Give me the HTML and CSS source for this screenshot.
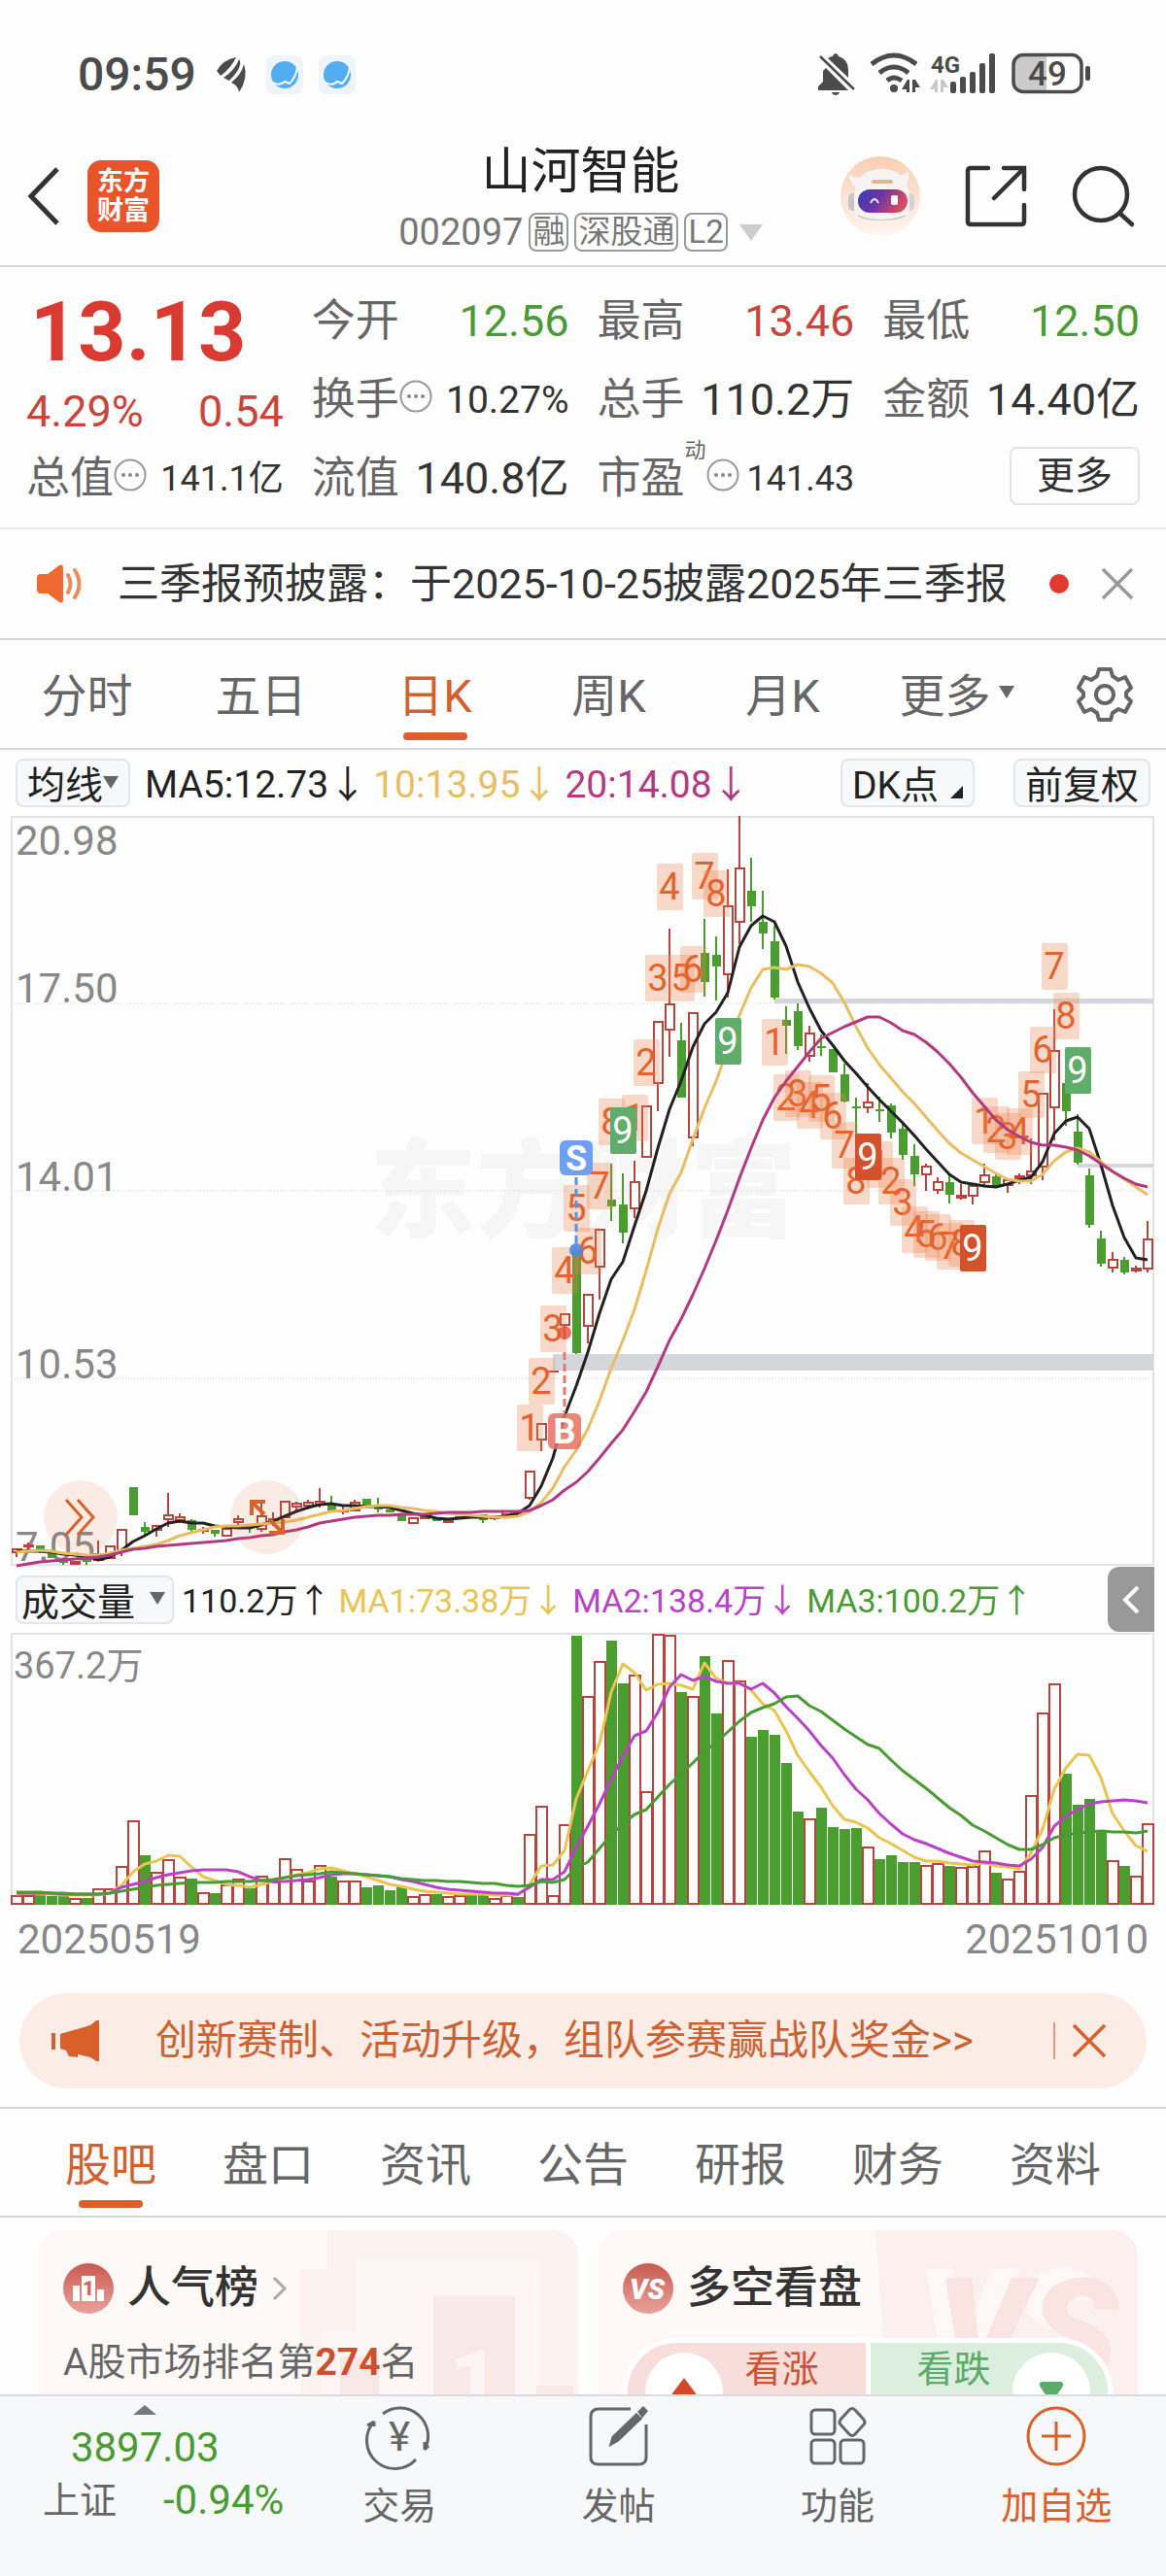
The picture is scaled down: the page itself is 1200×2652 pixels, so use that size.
FILE: index.html
```html
<!DOCTYPE html>
<html lang="zh-CN">
<head>
<meta charset="utf-8">
<meta name="viewport" content="width=device-width, initial-scale=1">
<title>山河智能 002097</title>
<link rel="stylesheet" href="styles.css">
</head>
<body>
<div class="status-bar">
  <div class="status-left">
    <span class="clock">09:59</span>
    <svg class="leaf-icon" viewBox="0 0 32 38"><path d="M1 15Q8 3 21 1Q16 12 5 20ZM8 22Q20 14 24 3Q29 10 14 25ZM16 27Q27 18 29 8Q34 22 24 37Q23 30 16 27Z" fill="#4b4b4b"/></svg>
    <svg class="app-dot" viewBox="0 0 38 40"><rect width="38" height="40" rx="8" fill="#eef3fc"/><circle cx="19" cy="20" r="14" fill="#52aef3"/><path d="M7 28Q14 32 19 27L24 29Q31 22 32 12" fill="none" stroke="#fff" stroke-width="2"/></svg>
    <svg class="app-dot" viewBox="0 0 38 40"><rect width="38" height="40" rx="8" fill="#eef3fc"/><circle cx="19" cy="20" r="14" fill="#52aef3"/><path d="M7 28Q14 32 19 27L24 29Q31 22 32 12" fill="none" stroke="#fff" stroke-width="2"/></svg>
  </div>
  <svg class="status-icons" viewBox="0 0 282 44" fill="#4b4b4b">
    <path d="M8 15L31 38H0V34L5 29V18ZM10 5Q13 3 15 3Q16 0 18 0T21 3Q31 6 31 17V25ZM14 40H22Q21 43 18 43T14 40Z"/>
    <path d="M2 3L37 37" stroke="#4b4b4b" stroke-width="2.5"/>
    <path d="M55 11Q78 -7 101 11M63 20Q78 8 93 20M71 28Q78 22 86 28" fill="none" stroke="#4b4b4b" stroke-width="5"/>
    <circle cx="78" cy="36" r="4"/><path d="M86 37L92 27H94V40H91V37ZM97 27H100L105 35H100V40H97Z"/>
    <text x="116" y="20" class="net-type">4G</text>
    <path d="M115 37L121 27H123V40H120V37ZM126 27H129L134 35H129V40H126Z" fill="#c8c8c8"/>
    <rect x="136" y="29" width="6" height="12" rx="2"/><rect x="146" y="24" width="6" height="17" rx="2"/><rect x="156" y="19" width="6" height="22" rx="2"/><rect x="166" y="10" width="6" height="31" rx="2"/><rect x="176" y="0" width="6" height="41" rx="2"/>
    <path d="M235 2H210Q201 2 201 11V30Q201 39 210 39H235Z" fill="#cacaca"/>
    <rect x="201" y="1.500" width="70" height="38" rx="10" fill="none" stroke="#4b4b4b" stroke-width="3.500"/>
    <rect x="275" y="13" width="5" height="15" rx="2"/>
    <text x="236" y="33" text-anchor="middle" class="battery">49</text>
  </svg>
</div>

<header class="header">
  <div class="header-left">
    <button class="icon-btn" aria-label="返回"><svg width="34" height="60" viewBox="0 0 34 60" fill="none" stroke="#333" stroke-width="5"><path d="M31 2L4 30L31 58"/></svg></button>
    <div class="logo"><span>东方</span><span>财富</span></div>
  </div>
  <div class="header-title">
    <h1>山河智能</h1>
    <div class="subtitle"><span>002097</span><span class="tag">融</span><span class="tag">深股通</span><span class="tag">L2</span><svg class="sub-arrow" width="24" height="17" viewBox="0 0 24 17"><path d="M0 0H24L12 17Z" fill="#ccc"/></svg></div>
  </div>
  <div class="header-right">
    <button class="icon-btn" aria-label="智能助手"><svg width="82" height="82" viewBox="0 0 82 82">
      <defs>
        <linearGradient id="peach" x1="0" y1="0" x2="0" y2="1"><stop offset="0" stop-color="#f9ceb2"/><stop offset="1" stop-color="#fef6f2"/></linearGradient>
        <linearGradient id="visor" x1="0" y1="0" x2="1" y2="0.300"><stop offset="0" stop-color="#3b3cb4"/><stop offset="0.500" stop-color="#6b35a4"/><stop offset="1" stop-color="#d84c62"/></linearGradient>
      </defs>
      <circle cx="41" cy="41" r="41" fill="url(#peach)"/>
      <path d="M9 17Q8 28 17 32L26 21Q12 24 9 17ZM69 13Q73 23 66 32L56 19Q68 21 69 13Z" fill="#f7f3f3"/>
      <rect x="8" y="38" width="10" height="18" rx="5" fill="#c9c4c6"/><rect x="66" y="38" width="10" height="18" rx="5" fill="#d5d0d2"/>
      <path d="M14 44Q14 13 42 13Q70 13 71 44V54Q71 64 60 65H24Q14 64 14 54Z" fill="#f6f3f3"/>
      <path d="M17 60Q41 70 68 60Q64 66 42 66Q20 66 17 60Z" fill="#cfcacc"/>
      <rect x="32" y="24" width="22" height="4" rx="2" fill="#e3b589"/>
      <rect x="18" y="34" width="51" height="24" rx="12" fill="url(#visor)"/>
      <path d="M31 48Q35 40 39 48" fill="none" stroke="#d9ecff" stroke-width="2"/><rect x="52" y="40" width="7" height="10" rx="2" fill="#fff"/>
    </svg></button>
    <button class="icon-btn" aria-label="分享"><svg width="62" height="62" viewBox="0 0 62 62" fill="none" stroke="#333" stroke-width="4.500" stroke-linecap="round"><path d="M23 2H5Q2 2 2 5V57Q2 60 5 60H57Q60 60 60 57V40M39 2H60V24M59 3L29 33"/></svg></button>
    <button class="icon-btn" aria-label="搜索"><svg width="64" height="64" viewBox="0 0 64 64" fill="none" stroke="#333" stroke-width="4.500" stroke-linecap="round"><circle cx="30" cy="30" r="27"/><path d="M50 50L62 61"/></svg></button>
  </div>
</header>

<section class="quote">
  <div class="price-block">
    <div class="price">13.13</div>
    <div class="change"><span>4.29%</span><span>0.54</span></div>
  </div>
  <div class="item"><span class="label">今开</span><span class="down">12.56</span></div>
  <div class="item"><span class="label">最高</span><span class="up">13.46</span></div>
  <div class="item"><span class="label">最低</span><span class="down">12.50</span></div>
  <div class="item"><span class="label">换手</span><svg class="hint" viewBox="0 0 34 34"><use href="#hint-dots"/></svg><span class="mid">10.27%</span></div>
  <div class="item"><span class="label">总手</span><span>110.2万</span></div>
  <div class="item"><span class="label">金额</span><span>14.40亿</span></div>
  <div class="item"><span class="label">总值</span><svg class="hint" viewBox="0 0 34 34"><g id="hint-dots"><circle cx="17" cy="17" r="15.500" fill="none" stroke="#999" stroke-width="2"/><circle cx="10" cy="17" r="2" fill="#888"/><circle cx="17" cy="17" r="2" fill="#888"/><circle cx="24" cy="17" r="2" fill="#888"/></g></svg><span class="small">141.1亿</span></div>
  <div class="item"><span class="label">流值</span><span>140.8亿</span></div>
  <div class="item"><span class="label">市盈</span><sup class="dyn">动</sup><svg class="hint" viewBox="0 0 34 34"><use href="#hint-dots"/></svg><span class="small">141.43</span></div>
  <div class="item item-end"><button class="more-btn">更多</button></div>
</section>

<section class="news">
  <svg width="50" height="40" viewBox="0 0 50 40"><path d="M5 10H12L24 1Q28 -1 28 4V36Q28 41 24 39L12 30H5Q1 30 1 26V14Q1 10 5 10Z" fill="#ee6a30"/><path d="M33 11Q38 20 33 29M40 6Q49 20 40 34" fill="none" stroke="#f08a5a" stroke-width="4" stroke-linecap="round"/></svg>
  <a class="news-text" href="#">三季报预披露：于2025-10-25披露2025年三季报</a>
  <span class="red-dot"></span>
  <button class="icon-btn" aria-label="关闭"><svg width="34" height="34" viewBox="0 0 34 34" stroke="#999" stroke-width="3.500"><path d="M2 2L32 32M32 2L2 32"/></svg></button>
</section>

<nav class="period-tabs">
  <button class="tab">分时</button>
  <button class="tab">五日</button>
  <button class="tab active">日K</button>
  <button class="tab">周K</button>
  <button class="tab">月K</button>
  <button class="tab">更多<svg width="16" height="13" viewBox="0 0 16 13"><path d="M0 0H16L8 13Z" fill="#666"/></svg></button>
  <button class="icon-btn gear" aria-label="设置"><svg width="58" height="58" viewBox="0 0 58 58" fill="none" stroke="#666" stroke-width="4" stroke-linejoin="round"><path d="M23 3H35L37 10L43 14L50 11L56 22L51 27V31L56 36L50 47L43 44L37 48L35 55H23L21 48L15 44L8 47L2 36L7 31V27L2 22L8 11L15 14L21 10Z"/><circle cx="29" cy="29" r="9"/></svg></button>
</nav>

<section class="indicator">
  <button class="chip chip-ma">均线<svg width="16" height="13" viewBox="0 0 16 13"><path d="M0 0H16L8 13Z" fill="#666"/></svg></button>
  <span class="ma black">MA5:12.73<i>↓</i></span>
  <span class="ma yellow">10:13.95<i>↓</i></span>
  <span class="ma purple">20:14.08<i>↓</i></span>
  <button class="chip chip-dk">DK点<svg width="13" height="13" viewBox="0 0 13 13"><path d="M13 0V13H0Z" fill="#222"/></svg></button>
  <button class="chip chip-fq">前复权</button>
</section>

<section class="chart-wrap">
  <svg id="kline" class="chart" viewBox="0 0 1200 772"></svg>
  <button class="float-btn float-next" aria-label="展开"><svg width="34" height="38" viewBox="0 0 34 38" fill="none" stroke="#d9622b" stroke-width="3"><path d="M2 1L18 19L2 37M14 1L30 19L14 37"/></svg></button>
  <button class="float-btn float-full" aria-label="全屏"><svg width="38" height="38" viewBox="0 0 38 38" fill="none" stroke="#d9622b" stroke-width="4"><path d="M17 3H3V17M3 3L16 16M21 35H35V21M35 35L22 22"/></svg></button>
</section>

<section class="volume-head">
  <button class="chip chip-vol">成交量<svg width="16" height="13" viewBox="0 0 16 13"><path d="M0 0H16L8 13Z" fill="#666"/></svg></button>
  <span class="ma black">110.2万<i>↑</i></span>
  <span class="ma gold">MA1:73.38万<i>↓</i></span>
  <span class="ma violet">MA2:138.4万<i>↓</i></span>
  <span class="ma green">MA3:100.2万<i>↑</i></span>
  <button class="drawer" aria-label="展开侧栏"><svg width="18" height="30" viewBox="0 0 18 30" fill="none" stroke="#fff" stroke-width="4"><path d="M16 2L3 15L16 28"/></svg></button>
</section>
<svg id="volume" class="chart" viewBox="0 0 1200 281"></svg>
<div class="dates"><span>20250519</span><span>20251010</span></div>

<section class="banner">
  <svg width="50" height="42" viewBox="0 0 50 42" fill="#d9602a"><path d="M0 13H4V30H0ZM9 14L40 5L46 0H49V42H46L40 38L27 35V38L18 37L15 31L9 29Z"/></svg>
  <a href="#">创新赛制、活动升级，组队参赛赢战队奖金&gt;&gt;</a>
  <span class="banner-sep"></span>
  <button class="icon-btn" aria-label="关闭"><svg width="36" height="36" viewBox="0 0 36 36" stroke="#d9602a" stroke-width="3.500"><path d="M2 2L34 34M34 2L2 34"/></svg></button>
</section>

<nav class="info-tabs">
  <button class="tab active">股吧</button><button class="tab">盘口</button><button class="tab">资讯</button><button class="tab">公告</button><button class="tab">研报</button><button class="tab">财务</button><button class="tab">资料</button>
</nav>

<main class="cards">
  <article class="card">
    <svg class="card-art" viewBox="0 0 285 200" preserveAspectRatio="xMaxYMin meet"><path d="M27 0H285V200H0V40H27Z" fill="#fcf2f0"/><path d="M20 104H56V30H246V200H20Z" fill="#fdf6f4"/><path d="M40 130H80V200H40ZM136 68H220V200H136ZM242 160H280V200H242Z" fill="#f9e9e6"/><text x="178" y="185" text-anchor="middle" class="art-one">1</text></svg>
    <div class="card-head">
      <svg width="52" height="52" viewBox="0 0 52 52"><defs><linearGradient id="badge" x1="0" y1="0" x2="0" y2="1"><stop offset="0" stop-color="#c85a50"/><stop offset="1" stop-color="#e8a39c"/></linearGradient></defs><circle cx="26" cy="26" r="26" fill="url(#badge)"/><path d="M10 23H17V39H10ZM19 13H33V39H19ZM35 27H42V39H35Z" fill="#fff"/><text x="26" y="33" text-anchor="middle" class="badge-one">1</text></svg>
      <h2>人气榜</h2>
      <svg width="16" height="26" viewBox="0 0 16 26" fill="none" stroke="#aaa" stroke-width="3"><path d="M2 2L13 13L2 24"/></svg>
    </div>
    <p class="rank">A股市场排名第<strong>274</strong>名</p>
  </article>
  <article class="card">
    <svg class="card-art" viewBox="0 0 270 200" preserveAspectRatio="xMaxYMin meet"><path d="M0 0H270V200H14Z" fill="#fbf0ee"/><text x="42" y="146" class="art-vs art-vs-back">VS</text><text x="62" y="156" class="art-vs">VS</text></svg>
    <div class="card-head">
      <svg width="52" height="52" viewBox="0 0 52 52"><circle cx="26" cy="26" r="26" fill="url(#badge)"/><text x="25" y="37" text-anchor="middle" class="badge-vs">VS</text></svg>
      <h2>多空看盘</h2>
    </div>
    <div class="vote">
      <button class="vote-up"><span class="knob"><svg width="24" height="36" viewBox="0 0 24 36"><path d="M12 0L24 16V36H0V16Z" fill="#d1492a"/></svg></span>看涨</button>
      <button class="vote-down">看跌<span class="knob"><svg width="26" height="36" viewBox="0 0 26 36"><path d="M3 4H23Q27 5 24 10L13 26L2 10Q-1 5 3 4Z" fill="#5cab6a"/></svg></span></button>
    </div>
  </article>
</main>

<nav class="bottom-bar">
  <a class="index-cell" href="#">
    <svg width="24" height="10" viewBox="0 0 24 10"><path d="M12 0L24 10H0Z" fill="#777"/></svg>
    <span class="index-value">3897.03</span>
    <span class="index-row"><span>上证</span><span class="index-change">-0.94%</span></span>
  </a>
  <a class="nav-cell" href="#"><svg width="72" height="64" viewBox="0 0 72 64" fill="none" stroke="#666" stroke-width="3"><path d="M19 9A29 29 0 0 1 62 46L66 42M53 56A29 29 0 0 1 10 17L3 21M10 17V22M62 46V38"/><text x="36" y="47" text-anchor="middle" class="yen">¥</text></svg>交易</a>
  <a class="nav-cell" href="#"><svg width="64" height="64" viewBox="0 0 64 64" fill="none" stroke="#666" stroke-width="3"><path d="M44 4H11Q3 4 3 12V54Q3 61 11 61H52Q60 61 60 54V20"/><path d="M24 40L26 33L50 10L54 14L31 36ZM53 7L57 3L60 6L56 11Z" fill="#666"/></svg>发帖</a>
  <a class="nav-cell" href="#"><svg width="64" height="64" viewBox="0 0 64 64" fill="none" stroke="#666" stroke-width="3"><rect x="5" y="5" width="24" height="25" rx="4"/><rect x="5" y="36" width="24" height="24" rx="4"/><rect x="35" y="36" width="24" height="24" rx="4"/><path d="M44 5Q47 2 50 5L59 15Q61 18 59 20L50 30Q47 33 44 30L35 20Q33 18 35 15Z"/></svg>功能</a>
  <a class="nav-cell add" href="#"><svg width="64" height="64" viewBox="0 0 64 64" fill="none" stroke="#d9602a" stroke-width="3"><circle cx="32" cy="32" r="29"/><path d="M17 32H47M32 17V47"/></svg>加自选</a>
</nav>
<script src="chart.js"></script>
</body>
</html>
```
FILE: styles.css
```css
* { box-sizing: border-box; }
body {
  margin: 0;
  height: 100vh;
  display: flex;
  flex-direction: column;
  background: #fefefe;
  color: #333;
  font-family: Roboto, "Noto Sans CJK SC", sans-serif;
}
body > * { flex: none; }
h1, h2, p { margin: 0; font-weight: 400; }
a { color: inherit; text-decoration: none; }
i { font-style: normal; }
button {
  font: inherit;
  color: inherit;
  background: none;
  border: 0;
  padding: 0;
}
svg { display: block; flex: none; overflow: visible; }
.icon-btn { display: flex; }
.up { color: #c8443c; }
.down { color: #4a9a35; }

.status-bar {
  height: 135px;
  padding: 19px 76px 0 80px;
  display: flex;
  align-items: center;
  justify-content: space-between;
}
.status-left { display: flex; align-items: center; gap: 16px; }
.clock { font-size: 48px; line-height: 56px; font-weight: 500; color: #4b4b4b; }
.leaf-icon { width: 32px; height: 38px; margin-left: 4px; margin-right: 4px; }
.app-dot { width: 38px; height: 40px; }
.status-icons { width: 282px; height: 44px; }
.net-type { font-size: 24px; font-weight: 700; }
.battery { font-size: 35px; font-weight: 500; }

.header {
  height: 140px;
  padding: 0 33px 0 28px;
  border-bottom: 2px solid #d8d8d8;
  display: grid;
  grid-template-columns: 1fr auto 1fr;
  align-items: center;
}
.header-left { display: flex; align-items: center; gap: 28px; padding-bottom: 4px; }
.logo {
  width: 74px;
  height: 74px;
  border-radius: 14px;
  background: #e9552a;
  color: #fff;
  display: flex;
  flex-direction: column;
  align-items: center;
  justify-content: center;
  font-size: 27px;
  line-height: 30px;
  font-weight: 700;
}
.header-title { display: flex; flex-direction: column; align-items: center; gap: 10px; }
.header-title h1 { font-size: 51px; line-height: 60px; color: #222; }
.subtitle {
  display: flex;
  align-items: center;
  gap: 6px;
  font-size: 38px;
  line-height: 44px;
  color: #777;
}
.tag {
  height: 40px;
  padding: 0 2px;
  border: 2px solid #999;
  border-radius: 8px;
  font-size: 33px;
  line-height: 36px;
}
.sub-arrow { margin-left: 6px; }
.header-right { display: flex; align-items: center; justify-content: flex-end; gap: 47px; padding-bottom: 4px; }

.quote {
  height: 270px;
  padding: 15px 27px 0;
  border-bottom: 2px solid #e6e6e6;
  display: grid;
  grid-template-columns: repeat(4, 1fr);
  grid-auto-rows: 81px;
  column-gap: 29px;
  font-size: 45px;
  line-height: 56px;
}
.price-block { grid-row: span 2; }
.price {
  padding: 4px 0 0 4px;
  font-size: 86px;
  line-height: 96px;
  font-weight: 700;
  color: #d93b33;
}
.change { display: flex; justify-content: space-between; margin-top: 6px; color: #c8443c; }
.item { display: flex; align-items: center; justify-content: space-between; }
.label { color: #666; }
.hint { width: 34px; height: 34px; margin-bottom: 8px; }
.mid { font-size: 39px; margin-left: auto; }
.small { font-size: 36px; margin-left: auto; }
.dyn { font-size: 22px; line-height: 24px; color: #666; align-self: flex-start; }
.item-end { justify-content: flex-end; }
.more-btn {
  width: 134px;
  height: 60px;
  margin-bottom: 6px;
  border: 2px solid #e4e4e4;
  border-radius: 8px;
  font-size: 39px;
}

.news {
  height: 114px;
  padding: 0 33px 0 37px;
  border-bottom: 2px solid #d8d8d8;
  display: flex;
  align-items: center;
}
.news-text { flex: 1; margin-left: 34px; font-size: 43px; line-height: 56px; white-space: nowrap; }
.red-dot { width: 20px; height: 20px; border-radius: 50%; background: #e03a31; margin-right: 33px; }

.period-tabs {
  height: 113px;
  border-bottom: 2px solid #d8d8d8;
  display: grid;
  grid-template-columns: repeat(6, 179fr) 126fr;
  justify-items: center;
}
.tab {
  position: relative;
  display: flex;
  align-items: center;
  gap: 8px;
  padding-bottom: 4px;
  font-size: 47px;
  color: #666;
}
.tab.active { color: #d0622f; }
.tab.active::after {
  content: "";
  position: absolute;
  bottom: 8px;
  left: calc(50% - 33px);
  width: 66px;
  height: 8px;
  border-radius: 4px;
  background: #d9602a;
}
.gear { align-items: center; }

.indicator {
  height: 68px;
  padding: 0 16px;
  display: flex;
  align-items: center;
}
.chip {
  height: 50px;
  padding: 0 10px 2px;
  border: 2px solid #e2e5e9;
  border-radius: 8px;
  background: #f7f8fa;
  color: #222;
  display: flex;
  align-items: center;
  justify-content: center;
  font-size: 39px;
}
.chip-ma { margin-right: 15px; }
.chip-dk { margin-left: auto; gap: 12px; }
.chip-dk svg { align-self: flex-end; margin-bottom: 5px; }
.chip-fq { margin-left: 40px; }
.chip-vol { gap: 15px; padding: 0 7px 2px 4px; }
.ma { font-size: 39px; line-height: 48px; white-space: nowrap; margin-right: 7px; }
.ma i { font-family: "Noto Sans CJK SC", sans-serif; }
.black { color: #222; }
.yellow { color: #e9bd62; }
.purple { color: #b23a80; }
.gold { color: #e8c452; }
.violet { color: #b843c6; }
.green { color: #4a9a35; }

.chart-wrap { position: relative; }
.chart { width: 100%; height: auto; }
.float-btn {
  position: absolute;
  bottom: 12px;
  width: 76px;
  height: 76px;
  border-radius: 50%;
  background: rgba(222, 110, 50, 0.12);
  display: flex;
  align-items: center;
  justify-content: center;
}
.float-next { left: 45px; }
.float-full { left: 237px; }
.axis { font-size: 42px; fill: #888; }
.axis-volume { font-size: 38px; fill: #888; }
.watermark { font-size: 110px; font-weight: 900; fill: #f6f6f6; }
.count { font-size: 38px; text-anchor: middle; }
.marker { font-size: 36px; font-weight: 700; text-anchor: middle; fill: #fff; }

.volume-head {
  height: 69px;
  padding: 0 12px 0 16px;
  display: flex;
  align-items: center;
}
.volume-head .ma { font-size: 34px; margin: 0 0 0 8px; }
.drawer {
  width: 48px;
  height: 67px;
  margin-left: auto;
  border-radius: 12px 0 0 12px;
  background: #999;
  display: flex;
  align-items: center;
  justify-content: center;
}
.dates {
  height: 90px;
  padding: 7px 18px 0;
  display: flex;
  justify-content: space-between;
  font-size: 42px;
  line-height: 56px;
  color: #888;
}

.banner {
  height: 98px;
  margin: 0 20px 19px;
  padding: 0 41px 0 33px;
  border-radius: 49px;
  background: #fbede6;
  color: #cb6233;
  display: flex;
  align-items: center;
}
.banner a { flex: 1; margin-left: 57px; font-size: 42px; line-height: 56px; white-space: nowrap; }
.banner-sep { width: 2px; height: 38px; background: #e09a78; margin-right: 17px; }

.info-tabs {
  height: 114px;
  padding: 0 67px;
  border-top: 2px solid #d8d8d8;
  border-bottom: 2px solid #d8d8d8;
  display: flex;
  justify-content: space-between;
}

.cards {
  flex: 1 1 0;
  min-height: 0;
  overflow: hidden;
  padding: 13px 29px 0 39px;
  display: grid;
  grid-template-columns: 1fr 1fr;
  gap: 20px;
}
.card {
  position: relative;
  height: 260px;
  padding: 34px 26px;
  border-radius: 26px;
  overflow: hidden;
  background: #fef8f6;
}
.card > * { position: relative; }
.card > .card-art { position: absolute; top: 0; right: 0; height: 200px; }
.art-one { font-size: 88px; font-weight: 900; fill: #fdf5f3; }
.art-vs { font-size: 150px; font-weight: 900; font-style: italic; fill: #f9e4e1; }
.art-vs-back { fill: #fdf7f5; }
.badge-one { font-size: 20px; font-weight: 900; fill: #cf655c; }
.badge-vs { font-size: 29px; font-weight: 900; font-style: italic; fill: #fff; }
.card-head { display: flex; align-items: center; gap: 14px; height: 52px; }
.card-head h2 { font-size: 45px; line-height: 52px; font-weight: 500; }
.rank { margin-top: 24px; font-size: 39px; line-height: 52px; color: #666; }
.rank strong { color: #cb502e; font-weight: 700; }
.vote {
  height: 110px;
  margin: 25px 0 0;
  border: 5px solid #fff;
  border-radius: 60px;
  overflow: hidden;
  display: grid;
  grid-template-columns: 1fr 1fr;
  gap: 5px;
  background: #fff;
  font-size: 38px;
}
.vote button { display: flex; justify-content: space-between; line-height: 46px; }
.vote-up { background: #f8dedb; color: #cf5232; padding: 4px 48px 0 18px; }
.vote-down { background: #dceedd; color: #5cab6a; padding: 4px 18px 0 48px; }
.knob {
  width: 80px;
  height: 80px;
  margin-top: 6px;
  padding-top: 26px;
  border-radius: 50%;
  background: #fff;
  display: flex;
  justify-content: center;
}

.bottom-bar {
  height: 187px;
  border-top: 2px solid #dadbdd;
  background: #f7f8fa;
  color: #666;
  display: grid;
  grid-template-columns: 298fr 225fr 225fr 225fr 225fr;
  font-size: 38px;
}
.index-cell { display: flex; flex-direction: column; align-items: center; padding-top: 9px; }
.index-value { font-size: 42px; line-height: 56px; margin-top: 6px; color: #4a9a35; }
.index-row { align-self: stretch; display: flex; gap: 48px; padding-left: 44px; line-height: 52px; }
.index-change { font-size: 42px; color: #4a9a35; }
.nav-cell { display: flex; flex-direction: column; align-items: center; gap: 15px; padding-top: 9px; line-height: 50px; }
.add { color: #d9602a; }
.yen { font-size: 42px; fill: #666; stroke: none; }
```
FILE: chart.js
```js
// Candle columns: direction, high, body top, body bottom, low
const candles = `r 754 754 759 763|r 748 750 753 755|g 751 751 755 759|g 756 756 764 764|g 764 766 769 771|r 767 767 771 771|g 765 765 768 771|r 746 759 767 767|r 751 751 765 765|r 734 734 757 762|g 691 691 720 720|g 727 732 737 740|r 730 730 736 742|r 697 719 725 732|r 718 721 726 728|g 724 725 735 738|r 732 734 737 739|g 735 735 739 742|r 733 733 742 742|r 720 723 728 731|g 729 731 733 738|r 705 720 735 737|r 717 723 729 731|r 705 705 723 723|r 706 707 712 716|r 704 706 711 714|r 692 705 710 712|g 700 709 715 715|r 709 714 717 719|r 704 706 716 716|g 703 703 711 711|g 702 712 714 717|g 714 714 717 717|g 719 719 726 726|r 722 722 729 729|r 721 721 724 724|g 722 722 726 726|r 724 724 728 728|r 721 721 724 724|g 720 720 722 722|g 719 719 725 728|r 722 722 724 725|r 715 715 720 721|r 717 717 720 720|r 674 674 703 704|r 625 625 643 654|r 571 571 573 573|r 512 512 525 539|g 447 447 553 554|r 492 492 526 543|r 425 425 465 498|g 358 395 402 417|g 368 400 429 440|r 355 376 405 414|r 298 298 352 352|r 211 211 276 304|r 116 193 221 248|g 213 231 290 290|r 202 202 332 340|g 106 141 171 186|g 124 143 155 190|r 55 92 164 187|r 0 53 110 132|g 43 77 93 109|g 77 109 121 137|g 113 129 187 189|g 196 210 216 245|g 193 201 237 241|r 216 223 248 253|g 225 237 239 247|g 240 240 264 264|g 255 266 294 295|g 290 299 301 330|r 275 294 301 306|g 289 302 304 315|g 296 298 326 332|g 317 322 349 354|g 338 350 369 381|r 358 360 370 386|r 372 376 386 389|g 369 377 390 399|r 379 390 394 395|r 380 380 392 400|r 358 369 378 380|g 368 371 381 382|r 374 374 381 388|r 368 370 374 379|r 332 365 371 379|r 285 285 362 375|r 199 241 301 334|g 275 275 304 319|g 307 325 357 359|g 363 370 421 424|g 427 435 461 464|r 449 456 466 470|g 454 457 470 472|r 463 465 469 470|r 417 435 467 470`
  .split('|').map(c => c.split(' ').map((v, k) => (k ? +v : v)));

const nums = s => s.split(' ').map(Number);
const ma5 = nums('757 757 757 758 760 761 762 766 763 756 747 741 734 728 726 728 728 731 732 733 733 730 726 721 716 712 709 708 710 710 711 711 712 715 718 720 723 724 723 722 722 722 721 718 710 690 661 618 587 552 512 477 459 422 386 342 302 273 238 214 202 182 135 113 103 109 134 171 198 221 236 252 265 279 292 304 316 329 343 356 369 377 379 381 382 379 375 372 356 327 314 310 322 359 401 434 455 457');
const ma10 = nums('758 757 756 757 759 760 761 761 759 756 754 752 750 746 741 738 735 732 731 731 730 729 728 727 725 722 719 716 715 713 711 710 710 712 713 715 716 718 719 720 721 722 722 721 716 707 692 670 653 631 602 569 540 508 468 425 389 367 333 301 273 240 205 177 158 156 158 153 155 162 172 192 217 239 256 270 284 296 310 324 337 347 354 361 368 374 376 376 369 355 346 342 346 356 366 374 382 390');
const ma20 = nums('772 770 768 767 766 765 764 763 761 758 755 754 752 751 750 749 748 747 746 744 743 741 740 737 735 732 728 726 724 722 721 720 720 719 719 719 718 717 717 717 716 716 716 716 715 710 704 694 686 675 661 646 632 613 593 567 540 518 493 466 437 406 373 342 313 290 273 258 243 229 223 217 212 207 207 213 221 225 233 243 255 269 285 299 313 323 330 336 339 339 341 344 350 358 366 373 379 382');
const volTop = nums('270 270 270 271 271 273 273 263 263 240 193 229 246 233 251 253 267 268 259 253 263 250 256 232 243 255 239 251 255 255 262 260 265 262 271 269 269 271 270 270 270 273 270 272 207 178 270 197 3 65 29 8 52 43 163 1 2 61 65 24 83 28 49 107 100 105 134 184 191 180 200 202 201 220 233 229 236 236 239 237 240 241 240 224 247 253 245 167 82 52 145 177 171 203 234 240 250 196');
const vma1 = nums('269 268 269 269 270 270 270 270 268 260 246 238 235 229 230 241 251 255 259 260 262 259 256 252 249 247 243 242 245 248 251 255 259 261 264 266 267 268 269 269 269 270 270 270 259 240 239 224 171 142 114 61 32 41 59 53 52 54 58 31 47 52 52 59 73 80 101 126 143 159 178 192 195 201 211 217 224 231 235 235 237 238 239 237 240 241 243 227 202 161 139 125 126 149 186 204 219 225');
const vma2 = nums('268 268 268 268 269 269 269 269 268 262 259 256 252 249 247 245 244 244 244 246 251 255 256 256 255 254 252 249 248 248 249 250 251 254 256 259 262 264 265 266 267 268 268 269 262 254 254 246 221 199 176 151 127 106 101 82 56 43 49 45 50 52 52 58 52 62 76 88 101 116 129 146 161 172 186 197 207 213 217 222 227 231 235 236 237 239 240 233 221 199 189 182 176 174 173 172 173 175');
const vma3 = nums('267 267 267 268 268 269 269 269 268 266 264 262 260 259 258 257 257 257 256 256 256 255 254 252 250 249 248 246 247 248 249 250 251 253 254 255 255 256 256 257 258 258 260 261 260 256 257 254 242 236 222 208 197 187 182 169 156 145 134 122 113 102 91 82 77 73 66 65 75 81 90 99 107 115 119 131 142 151 160 170 180 188 198 204 211 218 223 223 218 211 208 206 205 204 205 205 206 204');

// Sequence counts: digit, candle index, tag top, optional fill for the closing nine
const counts = [
  [1, 44, 606], [2, 45, 558], [3, 46, 504], [4, 47, 444], [5, 48, 380], [6, 49, 424], [7, 50, 357], [8, 51, 291],
  [1, 53, 287], [9, 52, 300, '#5fac6b'], [2, 54, 230], [3, 55, 143], [4, 56, 49], [5, 57, 143], [6, 58, 134], [7, 59, 38], [8, 60, 56], [9, 61, 208, '#5fac6b'],
  [1, 65, 209], [2, 66, 266], [3, 67, 262], [4, 68, 274], [5, 69, 267], [6, 70, 285], [7, 71, 315], [8, 72, 352], [9, 73, 327, '#d4512c'],
  [1, 74, 335], [2, 75, 352], [3, 76, 374], [4, 77, 402], [5, 78, 407], [6, 79, 410], [7, 80, 419], [8, 81, 416], [9, 82, 421, '#d4512c'],
  [1, 83, 290], [2, 84, 299], [3, 85, 306], [4, 86, 301], [5, 87, 263], [6, 88, 217], [7, 89, 131], [8, 90, 182], [9, 91, 238, '#5fac6b'],
];

const RED = '#b5453f';
const GREEN = '#4a9d2f';
const x = i => 17 + 12 * i;
const line = (ys, color) => `<polyline points="${ys.map((y, i) => x(i) + ',' + y).join(' ')}" fill="none" stroke="${color}" stroke-width="3" stroke-linejoin="round"/>`;

function candle([dir, high, top, bottom, low], i) {
  const cx = x(i);
  if (dir === 'g') {
    return `<path d="M${cx} ${high}V${low}" stroke="${GREEN}" stroke-width="2"/><rect x="${cx - 4}" y="${top}" width="9" height="${Math.max(2, bottom - top)}" fill="${GREEN}"/>`;
  }
  const body = bottom - top < 4
    ? `<rect x="${cx - 5}" y="${top}" width="11" height="${Math.max(2, bottom - top)}" fill="${RED}"/>`
    : `<rect x="${cx - 4}" y="${top + 1}" width="9" height="${bottom - top - 2}" fill="none" stroke="${RED}" stroke-width="2"/>`;
  return `<path d="M${cx} ${high}V${top}M${cx} ${bottom}V${low}" stroke="${RED}" stroke-width="2"/>${body}`;
}

function count([digit, i, top, fill]) {
  const cx = x(i);
  return `<rect x="${cx - 13}" y="${top}" width="27" height="48" rx="2" fill="${fill || '#ec8650'}" fill-opacity="${fill ? 1 : 0.3}"/>`
    + `<text class="count" x="${cx}" y="${top + 37}" fill="${fill ? '#fff' : '#e2632d'}">${digit}</text>`;
}

const axis = [['20.98', 40], ['17.50', 192], ['14.01', 386], ['10.53', 579], ['7.05', 767]];
document.getElementById('kline').innerHTML = `
  <text class="watermark" x="600" y="425" text-anchor="middle">东方财富</text>
  <rect x="12" y="1" width="1175" height="770" fill="none" stroke="#e3e3e3" stroke-width="2"/>
  <path d="M12 193H1187M12 386H1187M12 579H1187" stroke="#d0d0d0" stroke-dasharray="1 2"/>
  <path d="M569 554H1187V571H569ZM797 188H1187V193H797ZM1109 358H1187V362H1109Z" fill="#d5d6db"/>
  ${axis.map(([t, y]) => `<text class="axis" x="16" y="${y}">${t}</text>`).join('')}
  ${candles.map(candle).join('')}
  ${line(ma5, '#222')}
  ${counts.filter(c => !c[3]).map(count).join('')}
  ${line(ma10, '#e9bd62')}${line(ma20, '#b23a80')}
  ${counts.filter(c => c[3]).map(count).join('')}
  <path d="M593 372V440" stroke="#5f8fe6" stroke-width="3" stroke-dasharray="8 4"/>
  <circle cx="593" cy="447" r="7" fill="#4f86e0" fill-opacity="0.900"/>
  <rect x="576" y="334" width="34" height="36" rx="6" fill="#6f9ff2"/>
  <text class="marker" x="593" y="365">S</text>
  <path d="M581 552V614" stroke="#e8786d" stroke-width="3" stroke-dasharray="8 4"/>
  <circle cx="581" cy="532" r="7" fill="#e4523f" fill-opacity="0.800"/>
  <rect x="564" y="615" width="34" height="37" rx="6" fill="#e8705f" fill-opacity="0.850"/>
  <text class="marker" x="581" y="646">B</text>`;

document.getElementById('volume').innerHTML = `
  <path d="M12 281V1H1187V281" fill="none" stroke="#e3e3e3" stroke-width="2"/>
  <text class="axis-volume" x="14" y="47">367.2万</text>
  ${volTop.map((top, i) => {
    const up = candles[i][0] === 'r' && i !== 43 || i === 10;
    return up
      ? `<rect x="${x(i) - 5}" y="${top + 1}" width="11" height="${278 - top}" fill="#fff" stroke="${RED}" stroke-width="2"/>`
      : `<rect x="${x(i) - 5}" y="${top}" width="11" height="${280 - top}" fill="${GREEN}"/>`;
  }).join('')}
  ${line(vma1, '#e8c452')}${line(vma2, '#b843c6')}${line(vma3, '#4a9a35')}`;
```
